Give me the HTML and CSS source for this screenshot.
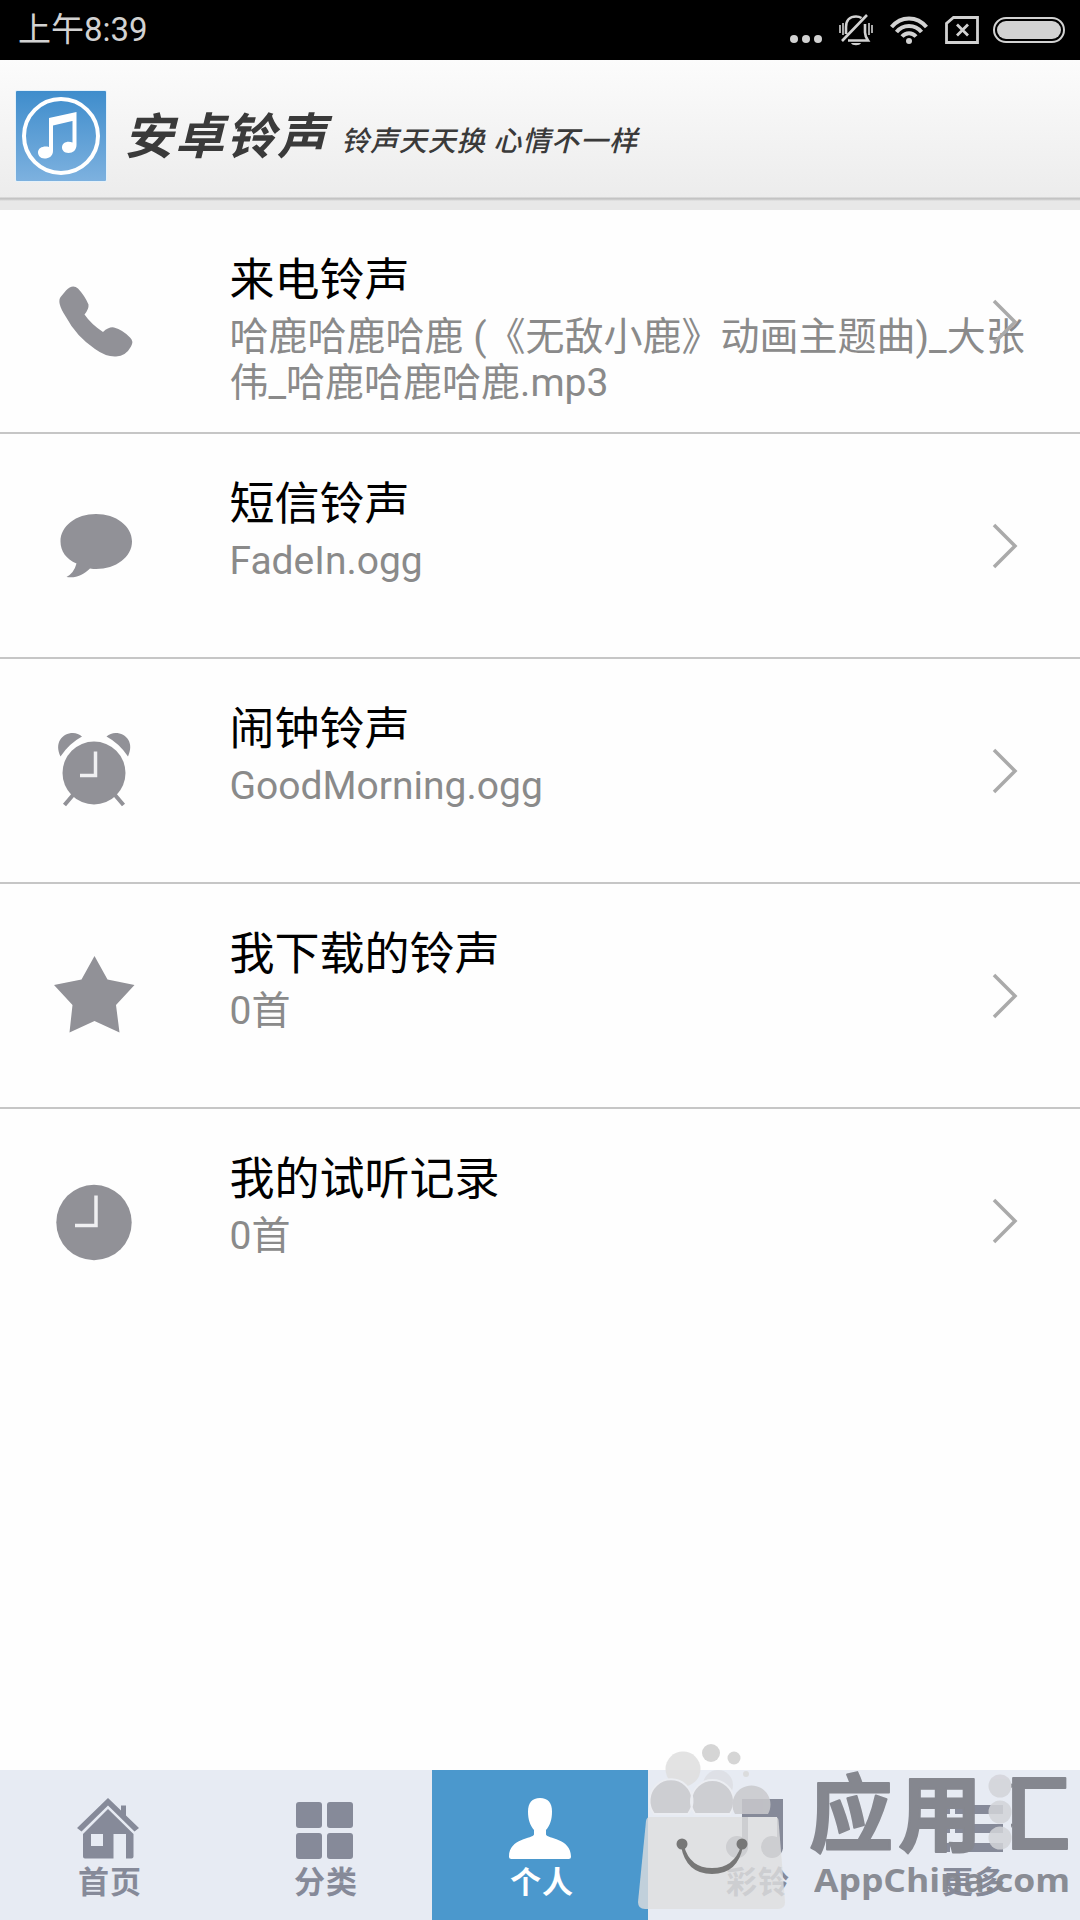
FILE: index.html
```
<!DOCTYPE html>
<html lang="zh-CN">
<head>
  <meta charset="UTF-8">
  <meta name="viewport" content="width=device-width, initial-scale=1.0">
  <title>安卓铃声</title>
  <link rel="stylesheet" href="styles.css">
</head>
<body>
  <!-- 状态栏 -->
  <div class="status-bar">
    <span class="time">上午8:39</span>
    <div class="status-icons">
      <svg class="dots" width="32" height="30" viewBox="0 0 32 30" fill="#d2d2d2">
        <circle cx="4" cy="24" r="4"/><circle cx="16" cy="24" r="4"/><circle cx="28" cy="24" r="4"/>
      </svg>
      <svg class="bell" width="36" height="32" viewBox="0 0 36 32" fill="none" stroke="#d2d2d2" stroke-width="2.6">
        <path d="M8 20V13C8 6 12 2.500 18 2.500c2 0 4 .5 5.500 1.500M10 26.500h20c-2-3-3-5-3-8V10M4 27 29 1"/>
        <path d="M2 11v8M5 9v12M34 11v8M31 9v12" stroke-width="1.600"/>
        <path d="M13 29h10c-1 3-9 3-10 0z" fill="#d2d2d2" stroke="none"/>
      </svg>
      <svg class="wifi" width="38" height="30" viewBox="0 0 38 30" fill="none" stroke="#d2d2d2" stroke-width="4">
        <path d="M1.500 12C11 .500 27 .500 36.500 12M6.500 17C13 9 25 9 31.500 17M12 21.500c4-4.500 10-4.500 14 0"/>
        <circle cx="19" cy="26" r="3" fill="#d2d2d2" stroke="none"/>
      </svg>
      <svg class="sim" width="34" height="30" viewBox="0 0 34 30" fill="none" stroke="#d2d2d2" stroke-width="2.800">
        <path d="M1.500 27.500V8.500L8.500 2.500H32.500v25zM12 9.500l11 11M23 9.500l-11 11"/>
      </svg>
      <div class="battery"><div class="battery-level"></div></div>
    </div>
  </div>

  <!-- 顶部标题 -->
  <header>
    <svg class="logo" width="92" height="92" viewBox="0 0 92 92">
      <defs>
        <linearGradient id="logoBg" x1="0" y1="0" x2="0" y2="1">
          <stop offset="0" stop-color="#3f8dcc"/>
          <stop offset="1" stop-color="#7db1df"/>
        </linearGradient>
      </defs>
      <rect width="92" height="92" rx="2" fill="#e4f1fa"/>
      <rect x="1" y="1" width="90" height="90" rx="1" fill="url(#logoBg)"/>
      <circle cx="46" cy="46" r="37" fill="none" stroke="#fff" stroke-width="4"/>
      <path d="M34 28 61.500 22v8L38 35.500V61c0 5-4 7.500-8.500 7.500S23 65 23 62.500c0-5 6-7 11-5.500zM57.500 30h4V55c0 5-3.500 8-8 8s-6.500-3-6.500-5.500c0-5 5.500-7 10.500-5z" fill="#fff"/>
    </svg>
    <h1>安卓铃声</h1>
    <span class="slogan">铃声天天换 心情不一样</span>
  </header>

  <!-- 铃声列表 -->
  <main>
    <ul class="ring-list">
      <li class="ring-item">
        <svg class="ring-icon" viewBox="0 0 84 84">
          <path d="M13 12.500Q19.500 5.500 25 10.500Q32 18 35.500 26.500Q36 31 31.500 36.500Q38 46 50 54Q56 48.500 61 49.500Q70 52 77 59.500Q81 63 78 68.500Q73 78 63 78.500Q53 79 42 71Q23 58 13 39Q3 24 8 18.500Z"/>
        </svg>
        <div class="ring-text">
          <h2>来电铃声</h2>
          <p>哈鹿哈鹿哈鹿 (《无敌小鹿》动画主题曲)_大张伟_哈鹿哈鹿哈鹿.mp3</p>
        </div>
        <svg class="arrow" viewBox="0 0 26 46"><path d="M2 2 23 23 2 44"/></svg>
      </li>
      <li class="ring-item">
        <svg class="ring-icon" viewBox="0 0 84 84">
          <path d="M43 11C63 11 79 23 79 38.500S63 66 43 66q-2.500 0-6-.500C30 72 23 75.500 13.500 74Q21 70 23.500 60.500C13 56 7.500 48 7.500 38.500 7.500 23 23 11 43 11z"/>
        </svg>
        <div class="ring-text">
          <h2>短信铃声</h2>
          <p>FadeIn.ogg</p>
        </div>
        <svg class="arrow" viewBox="0 0 26 46"><path d="M2 2 23 23 2 44"/></svg>
      </li>
      <li class="ring-item">
        <svg class="ring-icon" viewBox="0 0 84 84">
          <circle cx="41" cy="45" r="31.500"/>
          <path d="M7.500 28.500C1 15 9 5 20 5q5 0 9 3.500Q16 15.500 7.500 28.500zM75 28.500C81.500 15 73.500 5 62.500 5q-5 0-9 3.500Q66.500 15.500 75 28.500z"/>
          <path class="leg" d="M20 67 11.500 77M62 67 70.500 77"/>
          <path class="hand" d="M42.500 23.500v24H27"/>
        </svg>
        <div class="ring-text">
          <h2>闹钟铃声</h2>
          <p>GoodMorning.ogg</p>
        </div>
        <svg class="arrow" viewBox="0 0 26 46"><path d="M2 2 23 23 2 44"/></svg>
      </li>
      <li class="ring-item">
        <svg class="ring-icon" viewBox="0 0 84 84">
          <path d="M41.500 3 54.500 26.500 81.500 32 63 52 66.500 79.500 41.500 68 16.500 79.500 19.500 52 1 32 28.500 26.500z"/>
        </svg>
        <div class="ring-text">
          <h2>我下载的铃声</h2>
          <p>0首</p>
        </div>
        <svg class="arrow" viewBox="0 0 26 46"><path d="M2 2 23 23 2 44"/></svg>
      </li>
      <li class="ring-item">
        <svg class="ring-icon" viewBox="0 0 84 84">
          <circle cx="41" cy="43.500" r="37.700"/>
          <path class="hand" d="M43 16.500v30H22"/>
        </svg>
        <div class="ring-text">
          <h2>我的试听记录</h2>
          <p>0首</p>
        </div>
        <svg class="arrow" viewBox="0 0 26 46"><path d="M2 2 23 23 2 44"/></svg>
      </li>
    </ul>
  </main>

  <!-- 底部导航 -->
  <nav class="tab-bar">
    <a class="tab">
      <svg viewBox="0 0 64 64">
        <path d="M32 1 45 13.500V8.500h5v10L63 31l-4.500 3.500L32 8.500 5.500 34.500 1 31z"/>
        <path d="M32 12 57.500 37V59.500q0 2-2 2H50V37H37.500v24.500H9q-2 0-2-2V37zM15 37v12h12V37z" fill-rule="evenodd"/>
      </svg>
      <span>首页</span>
    </a>
    <a class="tab">
      <svg viewBox="0 0 64 64">
        <rect x="4" y="5" width="26" height="26" rx="3"/><rect x="35" y="5" width="26" height="26" rx="3"/>
        <rect x="4" y="36" width="26" height="26" rx="3"/><rect x="35" y="36" width="26" height="26" rx="3"/>
      </svg>
      <span>分类</span>
    </a>
    <a class="tab active">
      <svg viewBox="0 0 64 64">
        <path d="M32 1C40 1 44 6 44 14.500c0 8-2 14-6 18.500v4.500C39 42 63 41 63 59.500q0 2.500-2.500 2.500h-57Q1 62 1 59.500C1 41 25 42 26 37.500V33c-4-4.500-6-10.500-6-18.500C20 6 24 1 32 1z"/>
      </svg>
      <span>个人</span>
    </a>
    <a class="tab">
      <svg viewBox="0 0 64 64">
        <path d="M18 2H59V52H53V20H24V52H18z"/>
        <circle cx="13" cy="50" r="11"/><circle cx="48" cy="50" r="11"/>
      </svg>
      <span>彩铃</span>
    </a>
    <a class="tab">
      <svg viewBox="0 0 64 64">
        <path d="M1 8h9v9H1zM15 8h48v9H15zM1 27h9v9H1zM15 27h48v9H15zM1 46h9v9H1zM15 46h48v9H15z"/>
      </svg>
      <span>更多</span>
    </a>
  </nav>

  <!-- 应用汇水印 -->
  <svg class="watermark" width="446" height="180" viewBox="634 1740 446 180">
    <g class="bubbles">
      <circle cx="683" cy="1769" r="17.500" fill="#dfdfdf"/>
      <circle cx="711" cy="1753" r="9" fill="#cfcfcf"/>
      <circle cx="734" cy="1758" r="6.500" fill="#cfcfcf"/>
      <circle cx="746" cy="1774" r="3" fill="#dadada"/>
      <circle cx="718" cy="1785" r="15" fill="#dddfe4"/>
      <path d="M654 1814A21.500 21.500 0 1 1 688 1814zM695 1814A21.500 21.500 0 1 1 730 1814z" fill="#c9c9cd" stroke="#eceef2" stroke-width="2"/>
      <path d="M735 1814A19 19 0 1 1 768 1814z" fill="#c9c9cd"/>
    </g>
    <path d="M650 1817H775q3 0 3.500 3L785 1902q0 7-7 7H645q-7 0-7-7L646 1821q.500-4 4-4z" fill="#dedede" opacity=".8"/>
    <g fill="#777">
      <circle cx="682" cy="1844" r="5.500"/><circle cx="742" cy="1844" r="5.500"/>
      <path d="M681 1846Q686 1874 712 1874T743 1846L741 1846Q734 1868 712 1868T684 1846z"/>
    </g>
    <g class="brand">
      <text x="809" y="1845" textLength="84" lengthAdjust="spacingAndGlyphs">应</text>
      <text x="898" y="1845" textLength="84" lengthAdjust="spacingAndGlyphs">用</text>
      <text class="hui" x="984" y="1845" textLength="86" lengthAdjust="spacingAndGlyphs">汇</text>
    </g>
    <g fill="#d3d4d9" opacity=".85">
      <circle cx="1000" cy="1786" r="11.500"/><circle cx="1000" cy="1812" r="11.500"/><circle cx="1000" cy="1838" r="11.500"/>
    </g>
    <text class="domain" x="814" y="1892" textLength="256" lengthAdjust="spacingAndGlyphs">AppChina.com</text>
    <defs>
      <linearGradient id="huiFill">
        <stop offset=".31" stop-color="#d3d4d9" stop-opacity="0"/>
        <stop offset=".31" stop-color="#85878f"/>
      </linearGradient>
    </defs>
  </svg>
</body>
</html>
```

FILE: styles.css
```
* {
  margin: 0;
  padding: 0;
  box-sizing: border-box;
}
body {
  width: 1080px;
  height: 1920px;
  display: flex;
  flex-direction: column;
  position: relative;
  overflow: hidden;
  background: #fefefe;
  font-family: Roboto, "Noto Sans CJK SC", sans-serif;
  text-spacing-trim: space-all;
}

/* 状态栏 */
.status-bar {
  height: 60px;
  padding: 0 15px 0 18px;
  display: flex;
  justify-content: space-between;
  align-items: center;
  background: #000;
  color: #d2d2d2;
}
.time {
  font-size: 33px;
  line-height: 60px;
}
.status-icons {
  display: flex;
  align-items: center;
}
.bell {
  margin-left: 16px;
}
.wifi {
  margin-left: 16px;
}
.sim {
  margin-left: 17px;
}
.battery {
  width: 72px;
  height: 26px;
  margin-left: 14px;
  padding: 2px;
  border: 2px solid #d2d2d2;
  border-radius: 13px;
}
.battery-level {
  height: 100%;
  border-radius: 9px;
  background: #d2d2d2;
}

/* 顶部标题 */
header {
  height: 150px;
  padding: 30px 0 0 15px;
  display: flex;
  align-items: flex-start;
  background: linear-gradient(#fcfcfc, #ececec 137px, #c3c3c3 138px, #c3c3c3 139px, #e8e8e8 141px);
  color: #3a3a3a;
}
header h1 {
  margin: 12px 0 0 17px;
  font-size: 49px;
  line-height: 72px;
  letter-spacing: 2px;
  font-weight: 700;
  font-style: italic;
}
.slogan {
  margin: 27px 0 0 13px;
  font-size: 28px;
  line-height: 50px;
  letter-spacing: 0.9px;
  font-style: italic;
  font-weight: 500;
}

/* 铃声列表 */
main {
  flex: 1;
}
.ring-list {
  list-style: none;
}
.ring-item {
  height: 225px;
  display: flex;
  align-items: center;
  position: relative;
  padding: 0 50px 0 53px;
  border-bottom: 2px solid #c6c6c6;
}
.ring-item:first-child {
  height: 224px;
}
.ring-item:last-child {
  border-bottom: none;
}
.ring-icon {
  width: 84px;
  height: 84px;
  margin-bottom: 2px;
  fill: #919197;
}
.hand {
  fill: none;
  stroke: #f0f0f2;
  stroke-width: 3.5;
}
.leg {
  stroke: #919197;
  stroke-width: 4;
}
.ring-text {
  align-self: flex-start;
  width: 800px;
  margin: 44px 0 0 92.5px;
}
.ring-text h2 {
  font-size: 45px;
  line-height: 54px;
  font-weight: 400;
  color: #000;
}
.ring-text p {
  margin-top: 6px;
  font-size: 39px;
  line-height: 46px;
  color: #8a8a8a;
}

/* 箭头压在文字上面 */
.arrow {
  position: absolute;
  right: 62px;
  top: 89px;
  width: 26px;
  height: 46px;
  fill: none;
  stroke: #aaa;
  stroke-width: 3.5;
}

/* 底部导航 */
.tab-bar {
  height: 150px;
  display: flex;
  background: #e7ebf3;
}
.tab {
  flex: 1;
  padding-top: 27px;
  display: flex;
  flex-direction: column;
  align-items: center;
  color: #868a99;
  fill: #868a99;
}
.tab svg {
  width: 64px;
  height: 64px;
}
.tab span {
  font-size: 31px;
  line-height: 44px;
  letter-spacing: 1px;
  font-weight: 700;
  margin-left: 4px;
}
.tab.active {
  background: #4b98cd;
  color: #fff;
  fill: #fff;
}

/* 水印 */
.watermark {
  position: absolute;
  right: 0;
  bottom: 0;
}
.bubbles {
  opacity: 0.85;
}
.brand {
  font-family: "Noto Sans CJK SC", sans-serif;
  font-size: 84px;
  font-weight: 700;
  fill: #85878f;
  stroke: #85878f;
  stroke-width: 2;
  stroke-linejoin: round;
}
.hui {
  fill: url(#huiFill);
  stroke: url(#huiFill);
}
.domain {
  font-family: "Open Sans", sans-serif;
  font-size: 33px;
  font-weight: 700;
  fill: #85878f;
  opacity: 0.95;
}
```
